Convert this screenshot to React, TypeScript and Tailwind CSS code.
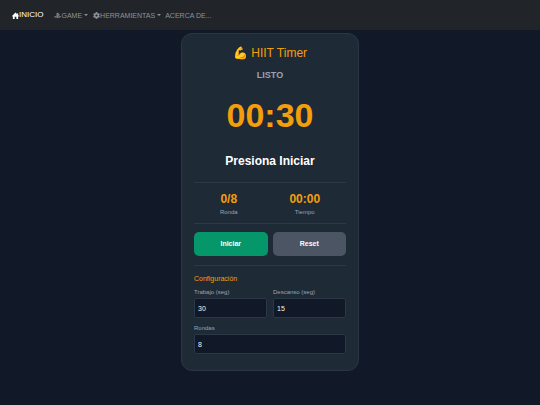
import { useState } from "react";
import { FaCog, FaPlaystation } from "react-icons/fa";

function Navbar() {
  return (
    <nav className="flex h-[30px] w-full items-center bg-[#212529] px-3 text-[7px] leading-none text-[#8f9295]">
      <a href="#inicio" className="flex items-center text-[8px] text-white">
        <svg viewBox="0 0 16 16" className="size-[7px]" fill="currentColor">
          <path d="M8 1 0 9l1.500 1.500L2 10v6h4v-5h4v5h4v-6l.5.5L16 9l-2-2V3h-2v2z" />
        </svg>
        INICIO
      </a>
      <button type="button" className="ml-[11px] flex items-center">
        <FaPlaystation className="size-[7px]" />
        GAME
        <Caret />
      </button>
      <button type="button" className="ml-[5px] flex items-center">
        <FaCog className="size-[7px]" />
        HERRAMIENTAS
        <Caret />
      </button>
      <a href="#acerca" className="ml-1">
        ACERCA DE...
      </a>
    </nav>
  );
}

function Caret() {
  return <span className="ml-[2px] border-x-2 border-t-2 border-x-transparent border-t-current" />;
}

interface FieldProps {
  id: string;
  label: string;
  value: number;
  onChange: (value: number) => void;
}

function Field({ id, label, value, onChange }: FieldProps) {
  return (
    <div className="min-w-0 flex-1">
      <label htmlFor={id} className="block text-[6px] leading-[8px] text-[#9ca3af]">
        {label}
      </label>
      <input
        id={id}
        type="number"
        value={value}
        onChange={(e) => onChange(Number(e.target.value))}
        className="mt-[2px] block h-5 w-full rounded-[2px] border border-[#2b3746] bg-[#111827] px-[3px] text-[7px] text-[#f3f4f6] outline-none"
      />
    </div>
  );
}

export default function App() {
  const [work, setWork] = useState(30);
  const [rest, setRest] = useState(15);
  const [rounds, setRounds] = useState(8);

  return (
    <div className="min-h-screen bg-[#111827] font-['Liberation_Sans',Arial,sans-serif]">
      <Navbar />

      <main className="mx-auto mt-[3px] w-full max-w-[178px] rounded-[11px] border border-[#2a3644] bg-[#1f2a37] px-3 pt-3 pb-4 text-center">
        <h1 className="text-[12px] leading-[14px] text-[#f59e0b]">💪 HIIT Timer</h1>
        <p className="mt-[9px] text-[9px] leading-[12px] font-bold text-[#9ca3af]">LISTO</p>
        <p className="mt-[14px] text-[34px] leading-[40px] font-bold text-[#f59e0b]">00:30</p>
        <h2 className="mt-[18px] text-[12px] leading-[16px] font-bold text-white">Presiona Iniciar</h2>

        <div className="mt-[13px] flex justify-around border-y border-[#2d3947] pt-[9px] pb-[7px]">
          <div>
            <div className="text-[12px] leading-[14px] font-bold text-[#f59e0b]">0/{rounds}</div>
            <div className="mt-[2px] text-[6px] leading-[8px] text-[#9ca3af]">Ronda</div>
          </div>
          <div>
            <div className="text-[12px] leading-[14px] font-bold text-[#f59e0b]">00:00</div>
            <div className="mt-[2px] text-[6px] leading-[8px] text-[#9ca3af]">Tiempo</div>
          </div>
        </div>

        <div className="mt-2 flex gap-[5px] text-[7px] font-bold text-white">
          <button type="button" className="h-6 flex-1 rounded-[5px] bg-[#059669]">
            Iniciar
          </button>
          <button type="button" className="h-6 flex-1 rounded-[5px] bg-[#4b5563]">
            Reset
          </button>
        </div>

        <form className="mt-[9px] border-t border-[#2d3947] pt-2 text-left">
          <h3 className="text-[7px] leading-[10px] text-[#f59e0b]">Configuración</h3>
          <div className="mt-1 flex gap-[6px]">
            <Field id="work" label="Trabajo (seg)" value={work} onChange={setWork} />
            <Field id="rest" label="Descanso (seg)" value={rest} onChange={setRest} />
          </div>
          <div className="mt-[6px] flex">
            <Field id="rounds" label="Rondas" value={rounds} onChange={setRounds} />
          </div>
        </form>
      </main>
    </div>
  );
}
